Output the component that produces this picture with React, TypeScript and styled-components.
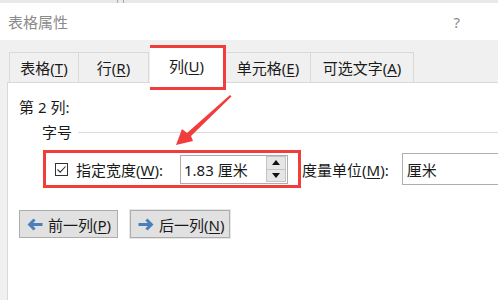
import styled, { createGlobalStyle } from "styled-components";

const Global = createGlobalStyle`
  html, body {
    margin: 0;
    padding: 0;
    background: #f0f0f0;
    width: 498px;
    height: 300px;
    overflow: hidden;
  }
  body {
    font-family: "Noto Sans", "Noto Sans CJK SC", sans-serif;
    font-size: 15px;
    color: #1a1a1a;
  }
`;

const Dialog = styled.div`
  position: relative;
  width: 498px;
  height: 300px;
  display: flex;
  flex-direction: column;
  background: #f0f0f0;
  overflow: hidden;
`;

const TopStrip = styled.div`
  height: 3px;
  background: #e9e9e9;
  display: flex;
`;

const StripDivider = styled.span<{ $left: number }>`
  width: 1px;
  height: 100%;
  background: #a9a9a9;
  margin-left: ${(p) => p.$left}px;
`;

const TitleBar = styled.div`
  height: 37px;
  background: #ffffff;
  display: flex;
  align-items: center;
  justify-content: space-between;
  padding: 0 38px 0 8px;
  color: #8a8a8a;
  font-size: 15px;
`;

const Help = styled.span`
  font-size: 15px;
  color: #8a8a8a;
`;

const Body = styled.div`
  flex: 1;
  display: flex;
  flex-direction: column;
  padding: 12px 0 0 7px;
`;

const TabRow = styled.div`
  display: flex;
  align-items: flex-end;
  padding-left: 2px;
  height: 30px;
`;

const Tab = styled.div<{ $w: number; $active?: boolean }>`
  box-sizing: border-box;
  width: ${(p) => p.$w}px;
  height: ${(p) => (p.$active ? 45 : 30)}px;
  margin-bottom: ${(p) => (p.$active ? -8 : 0)}px;
  margin-left: ${(p) => (p.$active ? 1 : 0)}px;
  display: flex;
  align-items: center;
  justify-content: center;
  white-space: nowrap;
  background: ${(p) => (p.$active ? "#ffffff" : "#f0f0f0")};
  border: ${(p) => (p.$active ? "3px solid #f23d3d" : "1px solid #d9d9d9")};
  border-bottom: ${(p) => (p.$active ? "3px solid #f23d3d" : "none")};
  & + & {
    border-left: ${(p) => (p.$active ? "3px solid #f23d3d" : "none")};
  }
  position: relative;
  z-index: ${(p) => (p.$active ? 2 : 0)};
  padding-bottom: ${(p) => (p.$active ? 4 : 0)}px;
`;

const Key = styled.span`
  text-decoration: underline;
  text-underline-offset: 2px;
`;

const Panel = styled.div`
  flex: 1;
  background: #ffffff;
  border-top: 1px solid #d9d9d9;
  border-left: 1px solid #d9d9d9;
  padding: 14px 0 0 11px;
  display: flex;
  flex-direction: column;
  position: relative;
  z-index: 1;
`;

const Line = styled.div`
  height: 20px;
  line-height: 20px;
`;

const GroupHeader = styled.div`
  display: flex;
  align-items: center;
  gap: 6px;
  margin: 4px 0 0 23px;
  height: 20px;
  &::after {
    content: "";
    flex: 1;
    height: 1px;
    background: #dcdcdc;
    margin-top: 2px;
  }
`;

const FieldRow = styled.div`
  display: flex;
  align-items: center;
  margin: 9px 0 0 24px;
`;

const Highlight = styled.div`
  box-sizing: border-box;
  width: 258px;
  height: 38px;
  border: 3px solid #f23d3d;
  display: flex;
  align-items: center;
  padding-left: 9px;
`;

const Check = styled.span`
  box-sizing: border-box;
  width: 13px;
  height: 13px;
  border: 1px solid #333333;
  display: flex;
  align-items: center;
  justify-content: center;
  margin-right: 8px;
`;

const Label = styled.span`
  white-space: nowrap;
`;

const SpinInput = styled.div`
  box-sizing: border-box;
  margin-left: 17px;
  width: 108px;
  height: 29px;
  border: 1px solid #adadad;
  display: flex;
  align-items: center;
  padding-left: 3px;
  justify-content: space-between;
  padding-right: 1px;
`;

const Spinner = styled.div`
  display: flex;
  flex-direction: column;
  width: 20px;
  height: 26px;
  border: 1px solid #c4c4c4;
  box-sizing: border-box;
`;

const SpinHalf = styled.div`
  flex: 1;
  background: #e6e6e6;
  display: flex;
  align-items: center;
  justify-content: center;
  & + & {
    border-top: 1px solid #c4c4c4;
  }
`;

const Unit = styled(Label)`
  margin-left: 1px;
`;

const TextInput = styled.div`
  box-sizing: border-box;
  margin-left: 13px;
  flex: 1;
  height: 32px;
  border: 1px solid #adadad;
  border-right: none;
  display: flex;
  align-items: center;
  padding-left: 4px;
`;

const ButtonRow = styled.div`
  display: flex;
  align-items: center;
  gap: 12px;
  margin-top: 22px;
`;

const Button = styled.div<{ $default?: boolean }>`
  box-sizing: border-box;
  height: 28px;
  width: ${(p) => (p.$default ? 100 : 99)}px;
  background: #e1e1e1;
  border: 1px solid #adadad;
  box-shadow: ${(p) => (p.$default ? "0 0 0 1px #e6e6e6" : "none")};
  display: flex;
  align-items: center;
  padding-left: 7px;
  gap: 5px;
  white-space: nowrap;
`;

const Annotation = styled.svg`
  position: absolute;
  left: 160px;
  top: 90px;
  z-index: 5;
  pointer-events: none;
`;

const ArrowIcon = ({ dir }: { dir: "left" | "right" }) => (
  <svg width="16" height="13" viewBox="0 0 16 13" style={{ transform: dir === "right" ? "scaleX(-1)" : undefined }}>
    <path d="M0.5 6.5 L6.5 0.5 L8.6 2.6 L6.2 5 H15.5 V8 H6.2 L8.6 10.4 L6.5 12.5 Z" fill="#4a7fbc" />
  </svg>
);

export default function App() {
  return (
    <Dialog>
      <Global />
      <TopStrip>
        <StripDivider $left={117} />
        <StripDivider $left={5} />
      </TopStrip>
      <TitleBar>
        <span>表格属性</span>
        <Help>?</Help>
      </TitleBar>
      <Body>
        <TabRow>
          <Tab $w={70}><Label>表格(<Key>T</Key>)</Label></Tab>
          <Tab $w={70}><Label>行(<Key>R</Key>)</Label></Tab>
          <Tab $w={76} $active><Label>列(<Key>U</Key>)</Label></Tab>
          <Tab $w={85}><Label>单元格(<Key>E</Key>)</Label></Tab>
          <Tab $w={103}><Label>可选文字(<Key>A</Key>)</Label></Tab>
        </TabRow>
        <Panel>
          <Line>第 2 列:</Line>
          <GroupHeader>字号</GroupHeader>
          <FieldRow>
            <Highlight>
              <Check>
                <svg width="11" height="11" viewBox="0 0 11 11">
                  <path d="M1.5 5.5 L4.2 8.2 L9.5 2.5" stroke="#333" strokeWidth="1.1" fill="none" />
                </svg>
              </Check>
              <Label>指定宽度(<Key>W</Key>):</Label>
              <SpinInput>
                <Label>1.83 厘米</Label>
                <Spinner>
                  <SpinHalf>
                    <svg width="8" height="5" viewBox="0 0 8 5"><path d="M0 5 L4 0 L8 5 Z" fill="#111" /></svg>
                  </SpinHalf>
                  <SpinHalf>
                    <svg width="8" height="5" viewBox="0 0 8 5"><path d="M0 0 L4 5 L8 0 Z" fill="#111" /></svg>
                  </SpinHalf>
                </Spinner>
              </SpinInput>
            </Highlight>
            <Unit>度量单位(<Key>M</Key>):</Unit>
            <TextInput>厘米</TextInput>
          </FieldRow>
          <ButtonRow>
            <Button>
              <ArrowIcon dir="left" />
              <Label>前一列(<Key>P</Key>)</Label>
            </Button>
            <Button $default>
              <ArrowIcon dir="right" />
              <Label>后一列(<Key>N</Key>)</Label>
            </Button>
          </ButtonRow>
        </Panel>
      </Body>
      <Annotation width="80" height="65" viewBox="0 0 80 65">
        <path d="M70 5 L71.5 6.5 L31 46 L33 51 L16 55 L22 39 L27 43 Z" fill="#f23d3d" />
      </Annotation>
    </Dialog>
  );
}
